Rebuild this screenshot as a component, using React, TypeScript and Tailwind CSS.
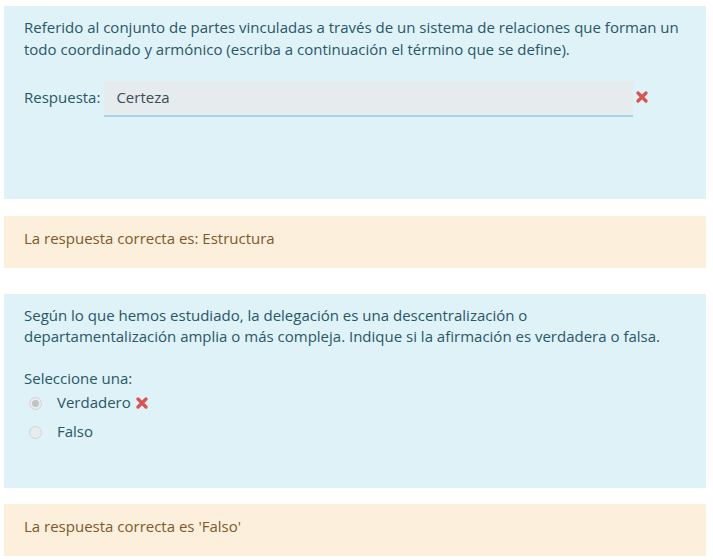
import React from "react";

const font = { fontFamily: '"Open Sans", "Liberation Sans", sans-serif' };

function XIcon() {
  return (
    <svg width="12" height="12" viewBox="0 0 12 12" className="shrink-0">
      <path d="M2 2 L10 10 M10 2 L2 10" stroke="#d9534f" strokeWidth="3.2" strokeLinecap="round" fill="none" />
    </svg>
  );
}

function Radio({ checked }: { checked?: boolean }) {
  return (
    <span className="w-[13px] h-[13px] rounded-full border border-[#cfd4d8] bg-[#e9ecef] flex items-center justify-center shrink-0">
      {checked && <span className="w-[7px] h-[7px] rounded-full bg-[#bfc3c6]" />}
    </span>
  );
}

export default function App() {
  return (
    <div className="bg-white w-[713px] h-[560px] overflow-hidden pt-[6px] px-[4px] text-[15px] leading-[22px]" style={font}>
      <div className="w-[702px] h-[193px] bg-[#def2f8] text-[#2a5766] px-[20px] pt-[10px]">
        <p>
          Referido al conjunto de partes vinculadas a través de un sistema de relaciones que forman un todo coordinado y armónico (escriba a continuación el término que se define).
        </p>
        <div className="flex items-center mt-[21px]">
          <span className="mr-[4px] pb-[4px]">Respuesta:</span>
          <div className="w-[529px] h-[36px] bg-[#e6ebee] border-b-2 border-[#a8d3ef] flex items-center px-[12px] pb-[3px] text-[#3d4b52]">
            Certeza
          </div>
          <span className="ml-[3px] flex items-center pb-[4px]"><XIcon /></span>
        </div>
      </div>

      <div className="mt-[17px] w-[702px] h-[52px] bg-[#fcefdc] text-[#7d5a29] px-[20px] pb-[8px] flex items-center">
        La respuesta correcta es: Estructura
      </div>

      <div className="mt-[26px] w-[702px] h-[194px] bg-[#def2f8] text-[#2a5766] px-[20px] pt-[11px] leading-[21px]">
        <p className="w-[650px]">
          Según lo que hemos estudiado, la delegación es una descentralización o departamentalización amplia o más compleja. Indique si la afirmación es verdadera o falsa.
        </p>
        <div className="mt-[20px] leading-[22px]">Seleccione una:</div>
        <div className="flex items-center h-[22px] mt-[3px] pl-[5px]">
          <Radio checked />
          <span className="ml-[15px] pb-[1px]">Verdadero</span>
          <span className="ml-[5px] flex items-center"><XIcon /></span>
        </div>
        <div className="flex items-center h-[22px] mt-[7px] pl-[5px]">
          <Radio />
          <span className="ml-[15px] pb-[1px]">Falso</span>
        </div>
      </div>

      <div className="mt-[16px] w-[702px] h-[52px] bg-[#fcefdc] text-[#7d5a29] px-[20px] pb-[8px] flex items-center">
        La respuesta correcta es 'Falso'
      </div>
    </div>
  );
}
